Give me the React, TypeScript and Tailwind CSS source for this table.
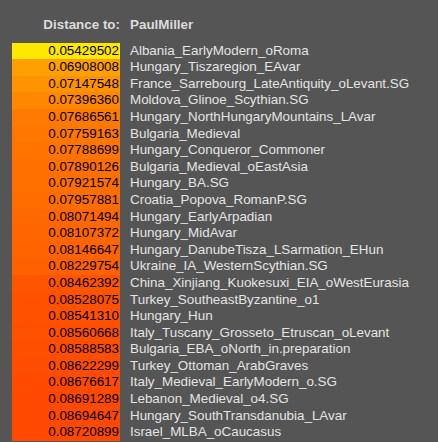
const TARGET = "PaulMiller";

const ROWS: [number, string][] = [
  [0.05429502, "Albania_EarlyModern_oRoma"],
  [0.06908008, "Hungary_Tiszaregion_EAvar"],
  [0.07147548, "France_Sarrebourg_LateAntiquity_oLevant.SG"],
  [0.0739636, "Moldova_Glinoe_Scythian.SG"],
  [0.07686561, "Hungary_NorthHungaryMountains_LAvar"],
  [0.07759163, "Bulgaria_Medieval"],
  [0.07788699, "Hungary_Conqueror_Commoner"],
  [0.07890126, "Bulgaria_Medieval_oEastAsia"],
  [0.07921574, "Hungary_BA.SG"],
  [0.07957881, "Croatia_Popova_RomanP.SG"],
  [0.08071494, "Hungary_EarlyArpadian"],
  [0.08107372, "Hungary_MidAvar"],
  [0.08146647, "Hungary_DanubeTisza_LSarmation_EHun"],
  [0.08229754, "Ukraine_IA_WesternScythian.SG"],
  [0.08462392, "China_Xinjiang_Kuokesuxi_EIA_oWestEurasia"],
  [0.08528075, "Turkey_SoutheastByzantine_o1"],
  [0.0854131, "Hungary_Hun"],
  [0.08560668, "Italy_Tuscany_Grosseto_Etruscan_oLevant"],
  [0.08588583, "Bulgaria_EBA_oNorth_in.preparation"],
  [0.08622299, "Turkey_Ottoman_ArabGraves"],
  [0.08676617, "Italy_Medieval_EarlyModern_o.SG"],
  [0.08691289, "Lebanon_Medieval_o4.SG"],
  [0.08694647, "Hungary_SouthTransdanubia_LAvar"],
  [0.08720899, "Israel_MLBA_oCaucasus"],
];

const min = ROWS[0][0];
const max = ROWS[ROWS.length - 1][0];

// yellow for the closest, sliding to red-orange for the farthest
function cellColor(v: number) {
  const t = (v - min) / (max - min);
  const g = Math.round(232 - t * 160);
  return `rgb(255, ${g}, 0)`;
}

export default function App() {
  return (
    <div className="min-h-screen bg-[#555555] pt-[17px] font-['Liberation_Sans',Arial,sans-serif] text-[length:13.4px] leading-[16.6px]">
      <div className="flex">
        <div className="w-[120px] text-right font-bold text-[#dcdcdc]">Distance to:</div>
        <div className="pl-[10px] font-bold text-[#dcdcdc]">{TARGET}</div>
      </div>
      <div className="mt-[9px]">
        {ROWS.map(([value, name]) => (
          <div key={name} className="flex h-[16.6px]">
            <div className="ml-3 w-[108px] pr-[1px] text-right text-black" style={{ backgroundColor: cellColor(value) }}>
              {value.toFixed(8)}
            </div>
            <div className="pl-[10px] whitespace-nowrap text-[#e4e4e4]">{name}</div>
          </div>
        ))}
      </div>
    </div>
  );
}
